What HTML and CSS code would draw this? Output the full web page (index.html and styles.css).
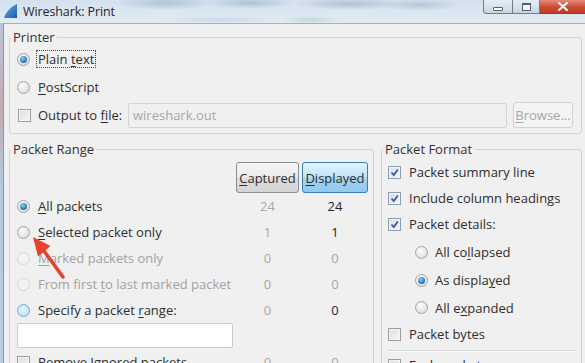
FILE: index.html
```html
<!DOCTYPE html>
<html>
<head>
<meta charset="utf-8">
<title>Wireshark: Print</title>
<link rel="stylesheet" href="styles.css">
</head>
<body>
<div class="win">
  <div class="titlebar">
    <svg class="appicon" viewBox="0 0 13 14" width="13" height="14">
      <defs>
        <linearGradient id="fin" x1="0" y1="0" x2="1" y2="1">
          <stop offset="0" stop-color="#6fb0ea"/>
          <stop offset="1" stop-color="#1659a8"/>
        </linearGradient>
      </defs>
      <path d="M0 14 C2 8 6 3 13 0 L13 14 Z" fill="url(#fin)"/>
    </svg>
    <span class="title">Wireshark: Print</span>
    <div class="caps">
      <div class="cap min"><span class="gmin"></span></div>
      <div class="cap max"><span class="gmax"></span></div>
      <div class="cap close">
        <svg viewBox="0 0 10 9" width="10" height="9"><path d="M1 1 L9 8 M9 1 L1 8" stroke="#fff" stroke-width="2" stroke-linecap="round"/></svg>
      </div>
    </div>
  </div>
  <div class="client">
    <fieldset class="grp printer">
      <legend>Printer</legend>
      <div class="prow"><span class="radio on"></span><span class="lbl focus">Plain <u>t</u>ext</span></div>
      <div class="prow"><span class="radio"></span><span class="lbl"><u>P</u>ostScript</span></div>
      <div class="prow"><span class="check cb-print"></span><span class="lbl">Output to <u>f</u>ile:</span>
        <div class="field dis">wireshark.out</div>
        <div class="btn dis"><u>B</u>rowse...</div>
      </div>
    </fieldset>
    <div class="lower">
      <fieldset class="grp range">
        <legend>Packet Range</legend>
        <div class="rgrid">
          <div></div>
          <div class="btn tog"><u>C</u>aptured</div>
          <div class="btn tog hot"><u>D</u>isplayed</div>

          <div class="rlab"><span class="radio on"></span><span class="lbl"><u>A</u>ll packets</span></div>
          <div class="num">24</div><div class="num act">24</div>

          <div class="rlab"><span class="radio"></span><span class="lbl"><u>S</u>elected packet only</span></div>
          <div class="num">1</div><div class="num act">1</div>

          <div class="rlab"><span class="radio dis"></span><span class="lbl dim"><u>M</u>arked packets only</span></div>
          <div class="num">0</div><div class="num">0</div>

          <div class="rlab"><span class="radio dis"></span><span class="lbl dim">From first <u>t</u>o last marked packet</span></div>
          <div class="num">0</div><div class="num">0</div>

          <div class="rlab"><span class="radio hover"></span><span class="lbl">Specify a packet <u>r</u>ange:</span></div>
          <div class="num">0</div><div class="num act">0</div>

          <div class="rfield"><div class="field"></div></div>
          <div></div><div></div>

          <div class="rlab"><span class="check"></span><span class="lbl">Remove <u>I</u>gnored packets</span></div>
          <div class="num">0</div><div class="num">0</div>
        </div>
      </fieldset>
      <fieldset class="grp format">
        <legend>Packet Format</legend>
        <div class="fcol">
          <div class="frow"><span class="check on"><svg viewBox="0 0 9 9" width="9" height="9"><path d="M1.5 4.5 L3.8 7 L7.8 1.5" fill="none" stroke="#3b5b94" stroke-width="1.8"/></svg></span><span class="lbl">Packet summary line</span></div>
          <div class="frow"><span class="check on"><svg viewBox="0 0 9 9" width="9" height="9"><path d="M1.5 4.5 L3.8 7 L7.8 1.5" fill="none" stroke="#3b5b94" stroke-width="1.8"/></svg></span><span class="lbl">Include column headings</span></div>
          <div class="frow"><span class="check on"><svg viewBox="0 0 9 9" width="9" height="9"><path d="M1.5 4.5 L3.8 7 L7.8 1.5" fill="none" stroke="#3b5b94" stroke-width="1.8"/></svg></span><span class="lbl">Packet details:</span></div>
          <div class="srow first"><span class="radio"></span><span class="lbl">All co<u>l</u>lapsed</span></div>
          <div class="srow"><span class="radio on"></span><span class="lbl">As displa<u>y</u>ed</span></div>
          <div class="srow last"><span class="radio"></span><span class="lbl">All e<u>x</u>panded</span></div>
          <div class="frow"><span class="check"></span><span class="lbl">Packet bytes</span></div>
          <div class="sep"></div>
          <div class="frow"><span class="check"></span><span class="lbl">Each packet on a new page</span></div>
        </div>
      </fieldset>
    </div>
  </div>
  <svg class="arrow" viewBox="0 0 585 363" width="585" height="363">
    <path d="M44 251 L63 277" stroke="#e8412c" stroke-width="3.5" stroke-linecap="round"/>
    <polygon points="33,237 50.5,246 38,256.5" fill="#e8412c"/>
  </svg>
</div>
</body>
</html>
```

FILE: styles.css
```css
* { box-sizing: border-box; }
html, body { margin: 0; padding: 0; }
body {
  width: 585px;
  height: 363px;
  overflow: hidden;
  font-family: "Open Sans", "Noto Sans", sans-serif;
  font-size: 13px;
  color: #2e2e2e;
  background: #f0f0f0;
}
u { text-decoration-thickness: 1px; text-underline-offset: 2px; }

.win {
  position: relative;
  width: 585px;
  height: 363px;
  display: flex;
  flex-direction: column;
  overflow: hidden;
  background: linear-gradient(#b8cde1, #c4aab6 30%, #b5c9dd 50%, #b8cde1);
}

/* title bar */
.titlebar {
  height: 23px;
  flex: none;
  display: flex;
  align-items: center;
  background:
    radial-gradient(ellipse 50px 7px at 165px 3px, rgba(110,135,160,.35), transparent),
    radial-gradient(ellipse 45px 6px at 250px 3px, rgba(100,130,165,.35), transparent),
    radial-gradient(ellipse 55px 6px at 350px 4px, rgba(110,130,150,.35), transparent),
    radial-gradient(ellipse 40px 6px at 420px 5px, rgba(110,130,150,.3), transparent),
    radial-gradient(ellipse 30px 4px at 310px 20px, rgba(90,170,110,.25), transparent),
    radial-gradient(ellipse 60px 4px at 220px 20px, rgba(110,140,170,.2), transparent),
    linear-gradient(#d3e1ee, #e3ecf4);
}
.appicon { margin-left: 4px; margin-right: 6px; margin-top: -2px; flex: none; }
.title { font-size: 12.5px; color: #1e2530; letter-spacing: -0.1px; }
.caps { margin-left: auto; align-self: flex-start; display: flex; height: 14px; }
.cap {
  height: 14px;
  display: flex;
  align-items: center;
  justify-content: center;
  border: 1px solid #6f7c8a;
  border-top: none;
}
.min {
  width: 29px;
  border-right: none;
  border-bottom-left-radius: 4px;
  background: linear-gradient(#e5edf5, #c7d6e4);
}
.max {
  width: 28px;
  background: linear-gradient(#e5edf5, #c7d6e4);
}
.close {
  width: 45px;
  border-color: #8a3a2e;
  border-left: none;
  border-right: none;
  background: linear-gradient(#e5897a, #c94a34 55%, #c23f2a);
}
.gmin { width: 10px; height: 4px; margin-top: 4px; background: #fff; border: 1px solid #55626f; border-radius: 1px; }
.gmax { width: 9px; height: 8px; border: 1px solid #55626f; border-top-width: 2px; background: #f3f6f9; }

/* client area */
.client {
  flex: 1;
  display: flex;
  flex-direction: column;
  margin-left: 3px;
  border-left: 1px solid #8796a6;
  border-top: 1px solid #a3b0bd;
  padding: 6px 3px 0 5px;
  background: #f0f0f0;
}

.grp {
  margin: 0;
  padding: 0;
  border: 1px solid #d3d3d3;
  border-radius: 3px;
  min-width: 0;
}
.grp legend {
  margin-left: 1px;
  padding: 0 2px;
  line-height: 15px;
  font-size: 13px;
  color: #333;
}

.printer { width: 573px; padding-bottom: 4px; }
.prow {
  height: 28px;
  display: flex;
  align-items: center;
  padding-left: 7px;
  padding-right: 8px;
}

.lbl { margin-left: 8px; white-space: nowrap; }
.lbl.focus { margin-left: 6px; padding: 0 1px; border: 1px dotted #444; line-height: 16px; }
.dim { color: #a2a2a2; }

/* radio */
.radio {
  flex: none;
  position: relative;
  width: 13px;
  height: 13px;
  border-radius: 50%;
  border: 1px solid #a0a6ad;
  background: radial-gradient(circle at 40% 35%, #fdfdfd, #dcdcdc 80%);
}
.radio.on::after {
  content: "";
  position: absolute;
  left: 2px; top: 2px;
  width: 7px; height: 7px;
  border-radius: 50%;
  background: radial-gradient(circle at 40% 35%, #8fd1f5, #2d78b8 60%, #1e5c96);
}
.radio.dis { border-color: #d2d4d6; background: #f3f3f3; }
.radio.hover {
  border-color: #6da8d4;
  background: radial-gradient(circle at 45% 40%, #eaf7fe, #b9e1f8 80%);
}

/* checkbox */
.check {
  flex: none;
  width: 13px;
  height: 13px;
  border: 1px solid #9a9da1;
  background: linear-gradient(135deg, #dadcde, #f7f7f7);
  display: flex;
  align-items: center;
  justify-content: center;
  box-shadow: inset 0 0 0 1px #f4f4f4;
}
.check.on {
  border-color: #8d9db3;
  background: linear-gradient(135deg, #d6dee9, #f5f8fb);
}
.cb-print { margin-left: 1px; }
.cb-print + .lbl { margin-left: 7px; }

/* text fields and buttons */
.field {
  height: 25px;
  border: 1px solid #c9cbcd;
  border-radius: 2px;
  background: #fff;
}
.prow .field {
  width: 379px;
  margin-left: auto;
  display: flex;
  align-items: center;
  padding-left: 4px;
  color: #a6a6a6;
}
.field.dis { background: #f0f0f0; border-color: #d3d5d7; }
.btn {
  display: flex;
  align-items: center;
  justify-content: center;
  border: 1px solid #a8acb0;
  border-radius: 3px;
  background: linear-gradient(#f6f6f6, #eaeaea 50%, #dedede 51%, #d4d4d4);
  white-space: nowrap;
}
.prow .btn { width: 60px; height: 26px; margin-left: 6px; }
.btn.dis { color: #a6a6a6; background: #f4f4f4; border-color: #d0d2d4; }

/* packet range */
.lower { display: flex; gap: 7px; margin-top: 8px; flex: 1; }
.range { width: 365px; }
.format { width: 201px; }
.rgrid {
  display: grid;
  grid-template-columns: 1fr 63px 66px;
  grid-template-rows: 31px repeat(7, 26px);
  column-gap: 3px;
  padding: 5px 7px 0 7px;
}
.tog { height: 31px; border-color: #8a8e92; }
.tog.hot {
  border-color: #3c7fb1;
  background: linear-gradient(#e3f3fd, #c2e4f9 45%, #a2d3f2 55%, #8fcaef);
}
.rlab { display: flex; align-items: center; }
.num { display: flex; align-items: center; justify-content: center; color: #a8a8a8; }
.num.act { color: #262626; }
.rfield { display: flex; align-items: flex-start; }
.rfield .field { width: 216px; }

/* packet format */
.fcol { padding: 2px 5px 0 6px; }
.frow { height: 26px; display: flex; align-items: center; }
.srow { height: 28px; display: flex; align-items: center; padding-left: 27px; }
.srow .lbl { margin-left: 7px; }
.srow.first { margin-top: 1px; }
.srow.last { height: 27px; }
.sep { height: 2px; margin-top: 3px; border-top: 1px solid #d6d6d6; border-bottom: 1px solid #fbfbfb; }

/* annotation arrow overlay */
.arrow { position: absolute; left: 0; top: 0; pointer-events: none; }
```
